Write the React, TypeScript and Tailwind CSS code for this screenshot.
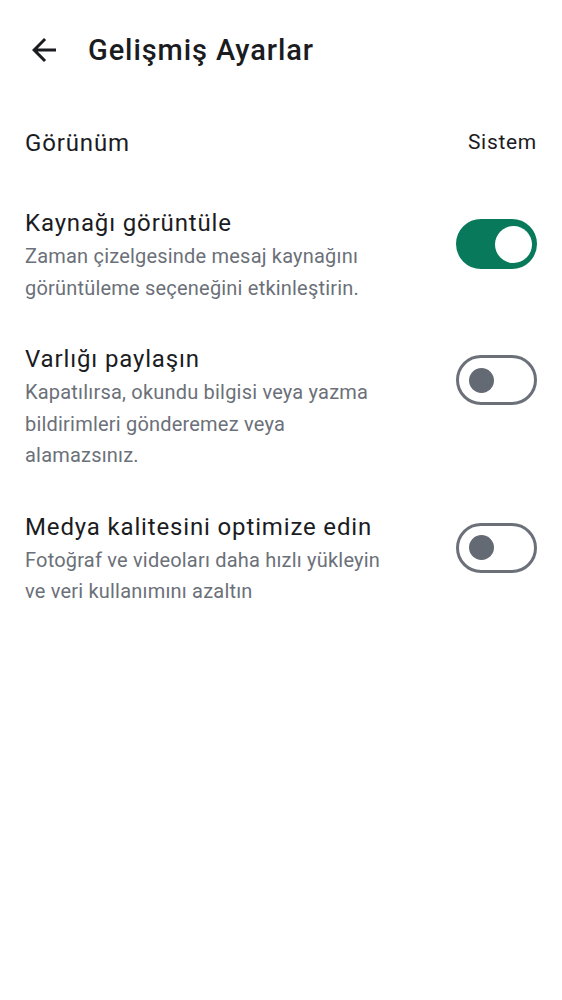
import { useState } from 'react';

type ToggleProps = {
  on: boolean;
  onChange: () => void;
};

function Toggle({ on, onChange }: ToggleProps) {
  return (
    <button
      onClick={onChange}
      className={
        on
          ? 'relative flex h-[50px] w-[81px] shrink-0 items-center rounded-full border-[3px] border-[#087a5b] bg-[#087a5b]'
          : 'relative flex h-[50px] w-[81px] shrink-0 items-center rounded-full border-[3px] border-[#6b7079] bg-white'
      }
    >
      <span
        className={
          on
            ? 'absolute left-[36px] h-[37px] w-[37px] rounded-full bg-white'
            : 'absolute left-[10px] h-[25px] w-[25px] rounded-full bg-[#646a74]'
        }
      />
    </button>
  );
}

export default function App() {
  const [source, setSource] = useState(true);
  const [presence, setPresence] = useState(false);
  const [media, setMedia] = useState(false);

  const rows = [
    {
      title: 'Kaynağı görüntüle',
      desc: ['Zaman çizelgesinde mesaj kaynağını', 'görüntüleme seçeneğini etkinleştirin.'],
      on: source,
      toggle: () => setSource(v => !v),
    },
    {
      title: 'Varlığı paylaşın',
      desc: ['Kapatılırsa, okundu bilgisi veya yazma', 'bildirimleri gönderemez veya', 'alamazsınız.'],
      on: presence,
      toggle: () => setPresence(v => !v),
    },
    {
      title: 'Medya kalitesini optimize edin',
      desc: ['Fotoğraf ve videoları daha hızlı yükleyin', 've veri kullanımını azaltın'],
      on: media,
      toggle: () => setMedia(v => !v),
    },
  ];

  return (
    <div className="min-h-[1000px] w-full bg-white font-['Roboto',sans-serif] text-[#1b1c1f]">
      {/* Top bar */}
      <div className="flex h-[100px] items-center pl-[26px]">
        <button className="flex h-[36px] w-[36px] items-center justify-center">
          <svg viewBox="0 0 24 24" className="h-[36px] w-[36px]" fill="#1b1c1f">
            <path d="M20 11H7.83l5.59-5.59L12 4l-8 8 8 8 1.41-1.41L7.83 13H20v-2z" />
          </svg>
        </button>
        <h1 className="ml-[26px] pt-[1px] text-[29px] font-medium leading-none tracking-[0.9px]">Gelişmiş Ayarlar</h1>
      </div>

      {/* Appearance */}
      <div className="flex h-[86px] items-center justify-between px-[25px]">
        <span className="text-[24px] tracking-[0.85px]">Görünüm</span>
        <span className="text-[21px] tracking-[0.7px]">Sistem</span>
      </div>

      {/* Toggles */}
      <div className="flex flex-col gap-[39px] pt-[21px]">
        {rows.map(row => (
          <div key={row.title} className="flex items-start justify-between px-[25px]">
            <div className="flex flex-col">
              <span className="text-[24px] leading-[32px] tracking-[0.85px]">{row.title}</span>
              <div className="mt-[2px] text-[20px] leading-[31.5px] tracking-[0.2px] text-[#6b7079]">
                {row.desc.map(line => (
                  <div key={line}>{line}</div>
                ))}
              </div>
            </div>
            <div className="pt-[12px]">
              <Toggle on={row.on} onChange={row.toggle} />
            </div>
          </div>
        ))}
      </div>
    </div>
  );
}
